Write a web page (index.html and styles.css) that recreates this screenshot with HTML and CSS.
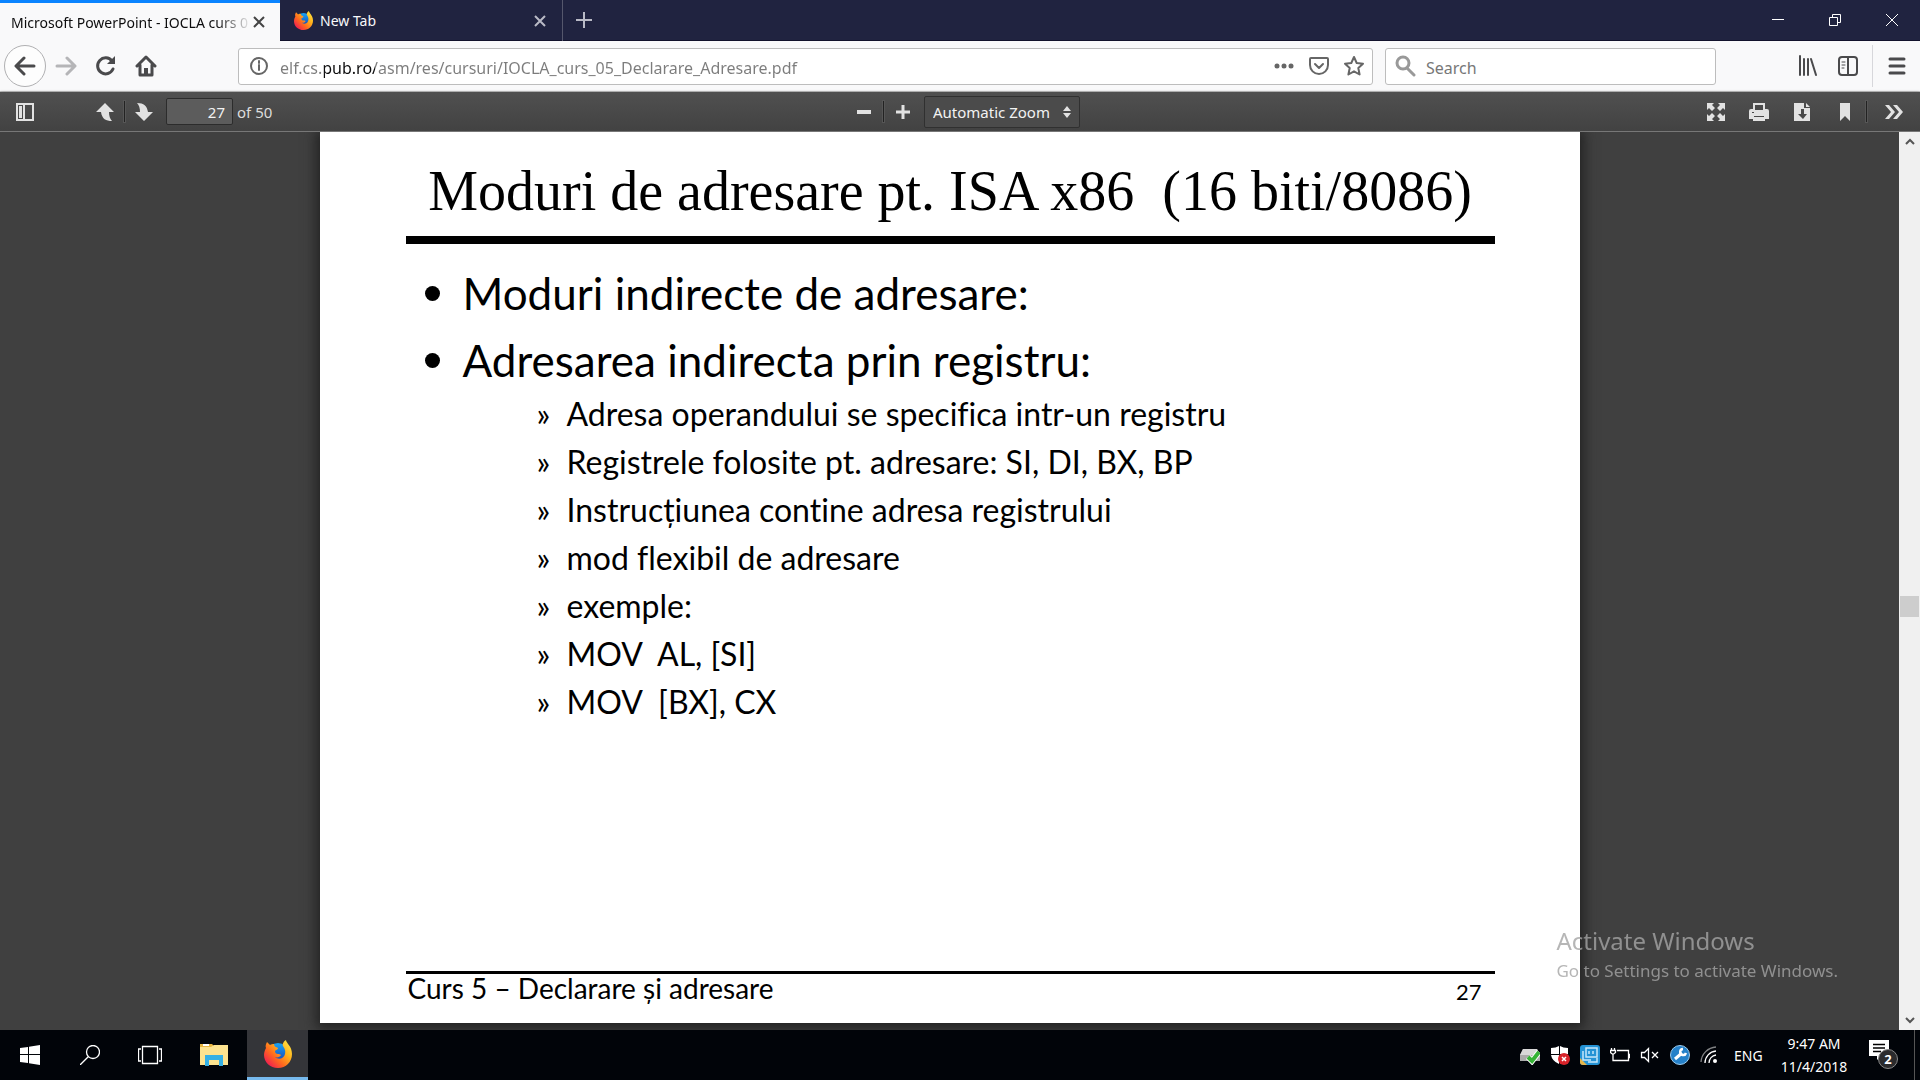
FILE: index.html
```html
<!DOCTYPE html>
<html lang="ro">
<head>
<meta charset="utf-8">
<title>Microsoft PowerPoint - IOCLA curs 05</title>
<link rel="stylesheet" href="styles.css">
</head>
<body>
<svg class="defs" aria-hidden="true">
  <defs>
    <linearGradient id="flame" x1="1" y1="0" x2="0" y2="1">
      <stop offset="0" stop-color="#fff14a"/><stop offset=".35" stop-color="#ffb21c"/>
      <stop offset=".6" stop-color="#ff6a1e"/><stop offset=".85" stop-color="#f2264b"/><stop offset="1" stop-color="#c3188a"/>
    </linearGradient>
    <linearGradient id="globe" x1="0" y1="0" x2="0" y2="1">
      <stop offset="0" stop-color="#17a4f5"/><stop offset="1" stop-color="#1b3fb0"/>
    </linearGradient>
    <symbol id="firefox" viewBox="0 0 28 28">
      <circle cx="14" cy="13" r="10" fill="url(#globe)"/>
      <path fill="url(#flame)" d="M3 2c1 1 2 2 3 3 1-1 3-1 4-1 0 1 1 3 2 3l2 1c0 2-3 2-3 3 0 2 1 3 3 3 1 0 2 0 3 1-1 2-4 3-6 2 3 3 9 2 10-3 1-4-1-6-2-8-1-2 1-5 3-6 0 3 6 6 6 14 0 8-6 14-14 14S0 22 0 15c0-3 1-5 2-7-1-2 0-4 1-6z"/>
    </symbol>
  </defs>
</svg>

<header class="tabs">
  <div class="tab tab-active">
    <span class="tab-title tab-fade">Microsoft PowerPoint - IOCLA curs 0</span>
    <button class="tab-close" aria-label="Close tab"><svg width="14" height="14" viewBox="0 0 14 14"><path d="M2 2l10 10M12 2L2 12"/></svg></button>
  </div>
  <div class="tab">
    <svg class="favicon" width="19" height="19"><use href="#firefox"/></svg>
    <span class="tab-title">New Tab</span>
    <button class="tab-close" aria-label="Close tab"><svg width="14" height="14" viewBox="0 0 14 14"><path d="M2 2l10 10M12 2L2 12"/></svg></button>
  </div>
  <button class="new-tab" aria-label="New tab"><svg width="18" height="18" viewBox="0 0 18 18"><path d="M9 1v16M1 9h16"/></svg></button>
  <div class="window-buttons">
    <button aria-label="Minimize"><svg width="14" height="14" viewBox="0 0 14 14"><path d="M1 6.500h12"/></svg></button>
    <button aria-label="Restore"><svg width="14" height="14" viewBox="0 0 14 14"><path d="M1.500 4.500h8v8h-8zM4.500 4.500v-3h8v8h-3"/></svg></button>
    <button aria-label="Close"><svg width="14" height="14" viewBox="0 0 14 14"><path d="M1 1l12 12M13 1L1 13"/></svg></button>
  </div>
</header>

<nav class="navbar">
  <button class="nav-btn back" aria-label="Back"><svg width="22" height="22" viewBox="0 0 22 22"><path d="M20 11H3M10 3l-8 8 8 8"/></svg></button>
  <button class="nav-btn forward" aria-label="Forward"><svg width="22" height="22" viewBox="0 0 22 22"><path d="M2 11h17M12 3l8 8-8 8"/></svg></button>
  <button class="nav-btn" aria-label="Reload"><svg width="22" height="22" viewBox="0 0 22 22"><path d="M18 14a8 8 0 1 1-1-8"/><path class="solid" d="M20 1v8h-8z"/></svg></button>
  <button class="nav-btn" aria-label="Home"><svg width="22" height="22" viewBox="0 0 22 22"><path d="M2 11l9-9 9 9M5 10v10h12V10"/><path class="solid" d="M9 20v-7h4v7z"/></svg></button>
  <div class="field url-field">
    <svg width="20" height="20" viewBox="0 0 20 20"><g class="info"><circle cx="10" cy="10" r="8"/><path d="M10 9v5M10 5v2"/></g></svg>
    <input class="url" type="text" aria-label="Address" value="elf.cs.pub.ro/asm/res/cursuri/IOCLA_curs_05_Declarare_Adresare.pdf">
    <button class="field-btn" aria-label="Page actions"><svg width="22" height="22" viewBox="0 0 22 22"><g class="solid"><circle cx="4" cy="11" r="2.500"/><circle cx="11" cy="11" r="2.500"/><circle cx="18" cy="11" r="2.500"/></g></svg></button>
    <button class="field-btn" aria-label="Save to Pocket"><svg width="22" height="22" viewBox="0 0 22 22"><path d="M3 3h16q1 0 1 1v6a9 9 0 0 1-18 0V4q0-1 1-1zM7 9l4 4 4-4"/></svg></button>
    <button class="field-btn" aria-label="Bookmark this page"><svg width="22" height="22" viewBox="0 0 22 22"><path d="M11 2l2.700 6 6.300.7-4.700 4.300 1.300 6.500L11 16.300l-5.600 3.200L6.700 13 2 8.700 8.300 8z"/></svg></button>
  </div>
  <div class="field search-field">
    <svg width="22" height="22" viewBox="0 0 22 22"><g class="glass"><circle cx="9" cy="8" r="6"/><path d="M13 13l7 7"/></g></svg>
    <input type="text" aria-label="Search" placeholder="Search">
  </div>
  <div class="nav-tools">
    <button class="nav-btn" aria-label="Library"><svg width="22" height="22" viewBox="0 0 22 22"><path class="books" d="M3 1v19M7 4v16M11 4v16M14 4l5 16"/></svg></button>
    <button class="nav-btn" aria-label="Sidebars"><svg width="22" height="22" viewBox="0 0 22 22"><g class="panel"><rect x="2" y="2" width="18" height="18" rx="3"/><path d="M11 2v18"/></g><path class="thin" d="M5 7h3M5 10h3M5 13h2"/></svg></button>
    <button class="nav-btn menu-btn" aria-label="Menu"><svg width="18" height="18" viewBox="0 0 18 18"><path d="M2 2h14M2 9h14M2 16h14"/></svg></button>
  </div>
</nav>

<div class="pdfbar">
  <div class="pdf-group">
    <button class="pdf-btn sidebar-toggle" aria-label="Toggle sidebar"><svg width="18" height="18" viewBox="0 0 18 18"><path d="M0 0h18v18H0zM2 2v14h14V2z" fill-rule="evenodd"/><path d="M3 3h3v12H3zM7 2h2v14H7z"/></svg></button>
    <button class="pdf-btn" aria-label="Previous page"><svg width="18" height="18" viewBox="0 0 18 18"><path d="M9 0l9 9h-5c0 4 1 7 3 9-6 0-10-2-11-9H0z"/></svg></button>
    <i class="split"></i>
    <button class="pdf-btn" aria-label="Next page"><svg width="18" height="18" viewBox="0 0 18 18"><path d="M9 18l9-9h-5C12 3 9 0 2 0c2 2 3 5 3 9H0z"/></svg></button>
    <label class="page-label"><input class="page-number" type="text" value="27" aria-label="Page">of 50</label>
  </div>
  <div class="pdf-group">
    <button class="pdf-btn" aria-label="Zoom out"><svg width="14" height="14" viewBox="0 0 14 14"><path d="M0 5h14v4H0z"/></svg></button>
    <i class="split"></i>
    <button class="pdf-btn" aria-label="Zoom in"><svg width="14" height="14" viewBox="0 0 14 14"><path d="M5.500 0h3v5.500H14v3H8.500V14h-3V8.500H0v-3h5.500z"/></svg></button>
    <div class="zoom">
      <select aria-label="Zoom"><option>Automatic Zoom</option></select>
      <svg width="8" height="12" viewBox="0 0 8 12"><path d="M4 0l4 5H0zM4 12l4-5H0z"/></svg>
    </div>
  </div>
  <div class="pdf-group pdf-right">
    <button class="pdf-btn wide" aria-label="Presentation mode"><svg width="18" height="18" viewBox="0 0 18 18"><path d="M0 0h7L5 2l3 3-3 3-3-3-2 2zM18 0v7l-2-2-3 3-3-3 3-3-2-2zM0 18v-7l2 2 3-3 3 3-3 3 2 2zM18 18h-7l2-2-3-3 3-3 3 3 2-2z"/></svg></button>
    <button class="pdf-btn wide" aria-label="Print"><svg width="20" height="18" viewBox="0 0 20 18"><path d="M4 0h12v6h2q2 0 2 2v8h-4v2H4v-2H0V8q0-2 2-2h2zM6 2v5h8V2zM5 13v1h10v-1zM3 9v1h2V9z" fill-rule="evenodd"/></svg></button>
    <button class="pdf-btn wide" aria-label="Download"><svg width="16" height="18" viewBox="0 0 16 18"><path d="M0 0h10v5h6v13H0zM7 6v5H4l5 5 4-5h-3V6zM12 0l4 4h-4z" fill-rule="evenodd"/></svg></button>
    <button class="pdf-btn wide" aria-label="Current view"><svg width="10" height="18" viewBox="0 0 10 18"><path d="M0 0h10v18l-5-5-5 5z"/></svg></button>
    <i class="split"></i>
    <button class="pdf-btn more" aria-label="Tools"><svg width="18" height="14" viewBox="0 0 18 14"><path d="M0 0h4l6 7-6 7H0l6-7zM8 0h4l6 7-6 7H8l6-7z"/></svg></button>
  </div>
</div>

<main class="viewer">
  <div class="canvas">
    <article class="slide">
      <h1>Moduri de adresare pt. ISA x86&nbsp; (16 biti/8086)</h1>
      <ul class="points">
        <li>Moduri indirecte de adresare:</li>
        <li>Adresarea indirecta prin registru:
          <ul class="details">
            <li>Adresa operandului se specifica intr-un registru</li>
            <li>Registrele folosite pt. adresare: SI, DI, BX, BP</li>
            <li>Instrucțiunea contine adresa registrului</li>
            <li>mod flexibil de adresare</li>
            <li>exemple:</li>
            <li>MOV&nbsp; AL, [SI]</li>
            <li>MOV&nbsp; [BX], CX</li>
          </ul>
        </li>
      </ul>
      <footer class="slide-footer"><span>Curs 5 – Declarare și adresare</span><span class="slide-number">27</span></footer>
    </article>
  </div>
  <div class="scrollbar">
    <svg width="10" height="8" viewBox="0 0 10 8"><path d="M1 6l4-4 4 4"/></svg>
    <div class="track"><div class="thumb"></div></div>
    <svg width="10" height="8" viewBox="0 0 10 8"><path d="M1 2l4 4 4-4"/></svg>
  </div>
  <div class="watermark">
    <p class="wm-title">Activate Windows</p>
    <p class="wm-text">Go to Settings to activate Windows.</p>
  </div>
</main>

<footer class="taskbar">
  <button class="task" aria-label="Start"><svg width="20" height="20" viewBox="0 0 20 20"><path fill="#fff" d="M0 3l8-1v7H0zM9 1.800L20 0v9H9zM0 10h8v8l-8-1zM9 10h11v10L9 18.200z"/></svg></button>
  <button class="task" aria-label="Search"><svg width="20" height="20" viewBox="0 0 20 20"><g class="line"><circle cx="13" cy="7" r="6.500"/><path d="M8.500 11.500L0 20"/></g></svg></button>
  <button class="task" aria-label="Task view"><svg width="24" height="20" viewBox="0 0 24 20"><path class="line" d="M4.500 1.500h15v17h-15zM3 4H.500v12H3M21 4h2.500v12H21"/></svg></button>
  <button class="task task-files" aria-label="File Explorer"><svg width="28" height="24" viewBox="0 0 28 24"><path fill="#e8b640" d="M0 1h12l2 2v3H0z"/><path fill="#fff" d="M3 1h6v2H3z"/><path fill="#fde38f" d="M0 4h11l3-2h14v20H0z"/><path fill="#35b0e5" d="M5 23V12h18v11h-4v-6H9v6z"/></svg></button>
  <button class="task task-active" aria-label="Firefox"><svg width="28" height="28"><use href="#firefox"/></svg></button>
  <div class="tray">
    <svg width="20" height="20" viewBox="0 0 20 20"><path fill="#aaa" d="M3 4h14l3 6v6H0v-6z"/><path fill="#d8d8d8" d="M3 4h14l3 6H0z"/><path fill="none" stroke="#fff" stroke-width="6" d="M8 12l4 4 7-9"/><path fill="none" stroke="#36b336" stroke-width="4" d="M8 12l4 4 7-9"/></svg>
    <svg width="20" height="20" viewBox="0 0 20 20"><path fill="#fff" d="M1 3q5 0 8-2v8H1zM10 1q3 2 8 2v6h-8zM1 10h8v9q-7-3-8-9zM10 10h8q-1 6-8 9z"/><circle cx="14" cy="14" r="6" fill="#d8232a"/><path stroke="#fff" stroke-width="1.500" d="M12 12l4 4M16 12l-4 4"/></svg>
    <svg width="20" height="20" viewBox="0 0 20 20"><rect width="20" height="20" rx="3" fill="#2493d5"/><path fill="#e7b64a" d="M0 13l7 7H3q-3 0-3-3z"/><path fill="none" stroke="#c5e7fa" stroke-width="1.500" d="M6 3h11v9H6zM3 6v9h8M9 6v3M13 6v3M8 17h9v-4"/></svg>
    <svg width="20" height="20" viewBox="0 0 20 20"><path class="line" d="M7 5.500h11.500v10H3V10M18.500 9.500h1v3h-1M1.500 3v3M4.500 3v3M.500 5.500h5v2l-2.500 2-2.500-2z"/></svg>
    <svg width="20" height="20" viewBox="0 0 20 20"><path class="line" d="M1.500 7.500h3l4-4v13l-4-4h-3zM12 7l6 6M18 7l-6 6"/></svg>
    <svg width="20" height="20" viewBox="0 0 20 20"><circle cx="10" cy="10" r="9.500" fill="#2581c9" stroke="#9ccbed"/><path stroke="#fff" stroke-width="3" d="M5 14l7-6"/><path fill="none" stroke="#fff" stroke-width="2.500" d="M13 4a3 3 0 1 0 3 4"/></svg>
    <svg width="20" height="20" viewBox="0 0 20 20"><path class="line" d="M5 18A12 12 0 0 1 16 6M9 18a8 8 0 0 1 7-8"/><path class="line dim" d="M1 17A16 16 0 0 1 16 2"/><circle cx="15" cy="16" r="2" fill="#fff"/></svg>
    <span class="lang">ENG</span>
    <div class="clock"><span>9:47 AM</span><span>11/4/2018</span></div>
    <button class="notify" aria-label="Notifications"><svg width="30" height="32" viewBox="0 0 30 32"><path fill="#fff" d="M0 1h20v16h-8l-4 4v-4H0z"/><path stroke="#000" stroke-width="1.500" d="M4 5.500h12M4 9h12M4 12.500h8"/></svg><span class="badge">2</span></button>
    <i class="show-desktop"></i>
  </div>
</footer>
</body>
</html>
```
FILE: styles.css
```css
* { box-sizing: border-box; }
body {
  margin: 0;
  min-height: 100vh;
  display: flex;
  flex-direction: column;
  font-family: "Noto Sans", sans-serif;
  font-size: 15px;
  color: #000;
}
button, input, select { font: inherit; margin: 0; }
button {
  border: 0;
  padding: 0;
  background: none;
  display: flex;
  align-items: center;
  justify-content: center;
}
svg { flex: none; display: block; }
.defs { position: absolute; width: 0; height: 0; }

/* Tab strip */
.tabs {
  display: flex;
  height: 41px;
  background: #202340;
  border-bottom: 1px solid #12122c;
  color: #f9f9fa;
}
.tab {
  display: flex;
  align-items: center;
  width: 283px;
  height: 41px;
  padding: 0 15px 0 14px;
  border-right: 1px solid #55576c;
  gap: 7px;
  font-size: 14px;
}
.tab-active {
  width: 280px;
  padding: 0 14px 0 11px;
  background: #f9f9fa;
  color: #0c0c0d;
  border-top: 3px solid #0a84ff;
  border-right: 0;
  gap: 0;
}
.tab-title { flex: 1; white-space: nowrap; }
.tab-fade { -webkit-mask-image: linear-gradient(to left, transparent, #000 36px); mask-image: linear-gradient(to left, transparent, #000 36px); }
.tab-close svg { fill: none; stroke: #b9bac6; stroke-width: 2; }
.tab-active .tab-close svg { stroke: #444; }
.new-tab { width: 42px; }
.new-tab svg { fill: none; stroke: #b9bac6; stroke-width: 2; }
.window-buttons { display: flex; margin-left: auto; }
.window-buttons button { width: 57px; }
.window-buttons svg { fill: none; stroke: #fff; stroke-width: 1; }

/* Navigation bar */
.navbar {
  display: flex;
  align-items: center;
  height: 51px;
  padding-left: 4px;
  background: #f9f9fa;
  border-bottom: 1px solid #ccc;
}
.nav-btn { flex: none; width: 40px; height: 42px; }
.nav-btn svg, .field svg { fill: none; stroke: #4a4a4c; stroke-width: 3; stroke-linecap: round; stroke-linejoin: round; }
.nav-btn .solid { fill: #4a4a4c; stroke: none; }
.nav-btn .thin { stroke-width: 1; }
.nav-btn .books, .nav-btn .panel { stroke-width: 2; }
.back { width: 42px; border: 1px solid #b0b0b2; border-radius: 50%; background: #fdfdfd; }
.forward svg { stroke: #b5b5b7; }
.field {
  display: flex;
  align-items: center;
  height: 37px;
  border: 1px solid #bdbdbd;
  border-radius: 3px;
  background: #fff;
}
.field input {
  flex: 1;
  min-width: 0;
  border: 0;
  padding: 3px 0 0;
  background: transparent;
  outline: 0;
  font-size: 16px;
  line-height: 24px;
}
.url-field { flex: 1; margin: 0 12px 0 72px; padding: 0 1px 0 10px; gap: 0; }
.field .url {
  margin-left: 11px;
  color: transparent;
  background: linear-gradient(90deg, #7c7c7c 44px, #0c0c0d 44px, #0c0c0d 95px, #7c7c7c 95px);
  -webkit-background-clip: text;
  background-clip: text;
}
.field-btn { width: 35px; height: 35px; }
.field .field-btn svg { stroke: #666; stroke-width: 2; }
.field-btn .solid { fill: #666; stroke: none; }
.field .info { stroke: #666; stroke-width: 2; }
.field .glass { stroke: #999; }
.search-field { flex: 0 1 331px; padding: 0 8px; gap: 10px; }
.search-field input::placeholder { color: #777; opacity: 1; }
.nav-tools { display: flex; margin-left: 72px; }
.menu-btn { width: 48px; border-left: 1px solid #d7d7db; margin-left: 4px; }

/* PDF toolbar */
.pdfbar {
  display: grid;
  grid-template-columns: 1fr auto 1fr;
  height: 40px;
  background: linear-gradient(#505050, #424242);
  border-bottom: 1px solid #777;
  box-shadow: 0 1px 3px #222;
  color: #ddd;
}
.pdf-group { display: flex; align-items: center; padding-left: 5px; }
.pdf-right { justify-content: flex-end; }
.pdf-btn { width: 38px; height: 32px; }
.pdf-btn svg, .zoom svg { fill: #e2e2e2; }
.sidebar-toggle { width: 40px; margin-right: 41px; }
.wide { width: 43px; }
.more { width: 53px; }
.split { width: 1px; height: 21px; background: #222; box-shadow: 0 0 0 1px #565656; }
.page-label { display: flex; align-items: center; gap: 4px; margin-left: 3px; }
.page-number {
  width: 67px;
  height: 27px;
  padding: 0 7px;
  border: 1px solid #2c2c2c;
  border-radius: 2px;
  background: #5c5c5c;
  color: #f2f2f2;
  text-align: right;
}
.zoom { position: relative; width: 156px; margin-left: 2px; }
.zoom select {
  appearance: none;
  width: 100%;
  height: 32px;
  padding: 0 8px;
  border: 1px solid #303030;
  border-radius: 2px;
  background: #4b4b4b;
  color: #f2f2f2;
}
.zoom svg { position: absolute; right: 9px; top: 10px; pointer-events: none; }

/* Document area */
.viewer { position: relative; flex: 1; display: flex; background: #404040; }
.canvas { flex: 1; display: flex; justify-content: center; padding-bottom: 7px; overflow: hidden; }
.slide {
  display: flex;
  flex-direction: column;
  width: 1260px;
  padding: 0 85px 0 86px;
  background: #fff;
  box-shadow: 0 2px 12px 4px #222;
  font-family: Lato, sans-serif;
  font-variant-ligatures: none;
}
.slide h1 {
  margin: 0;
  padding: 24px 0 10px;
  border-bottom: 8px solid #000;
  font: 400 56px/70px "Liberation Serif", serif;
  text-align: center;
  white-space: nowrap;
}
.slide ul { margin: 0; padding: 0; list-style: none; }
.slide li { position: relative; }
.slide .points { padding-top: 16px; }
.points > li { padding-left: 57px; font-size: 44px; line-height: 67px; }
.points > li::before {
  content: "";
  position: absolute;
  left: 19px;
  top: 26px;
  width: 15px;
  height: 15px;
  border-radius: 50%;
  background: #000;
}
.slide .details { margin-top: -4px; }
.details li { padding-left: 104px; font-size: 32px; line-height: 48px; }
.details li::before { content: "»"; position: absolute; left: 74px; }
.slide-footer {
  display: flex;
  justify-content: space-between;
  margin-top: auto;
  height: 52px;
  padding: 0 13px 0 2px;
  border-top: 3px solid #000;
  font-size: 28px;
  line-height: 28px;
}
.slide-number { font-size: 22px; line-height: 36px; }
.scrollbar {
  display: flex;
  flex-direction: column;
  align-items: center;
  width: 21px;
  padding: 6px 0;
  background: #f0f0f0;
}
.scrollbar svg { fill: none; stroke: #555; stroke-width: 2; }
.track { flex: 1; width: 19px; padding-top: 450px; }
.thumb { height: 21px; background: #cdcdcd; }
.watermark { position: absolute; right: 82px; bottom: 46px; color: #a4a4a4; opacity: .8; }
.watermark p { margin: 0; white-space: nowrap; }
.wm-title { font-size: 24px; line-height: 33px; }
.wm-text { font-size: 17px; line-height: 27px; }

/* Windows taskbar */
.taskbar { display: flex; height: 50px; background: #010409; color: #fff; }
.task { width: 60px; }
.task-files { width: 67px; }
.task-active { width: 61px; background: #343539; border-bottom: 3px solid #76b9ed; }
.line { fill: none; stroke: #fff; stroke-width: 1.3; }
.dim { opacity: .5; }
.tray { display: flex; align-items: center; margin-left: auto; gap: 10px; }
.lang { margin-left: 4px; width: 32px; font-size: 14px; }
.clock {
  display: flex;
  flex-direction: column;
  align-items: center;
  width: 76px;
  font-size: 14px;
  line-height: 23px;
}
.notify { position: relative; width: 30px; margin-left: 7px; color: #fff; }
.badge {
  position: absolute;
  left: 9px;
  top: 10px;
  width: 20px;
  height: 20px;
  border: 1px solid #888;
  border-radius: 50%;
  background: #2b2b2d;
  font-size: 13px;
  font-weight: 700;
  line-height: 18px;
}
.show-desktop { width: 6px; height: 50px; border-left: 1px solid #555; margin-left: 5px; }
```
